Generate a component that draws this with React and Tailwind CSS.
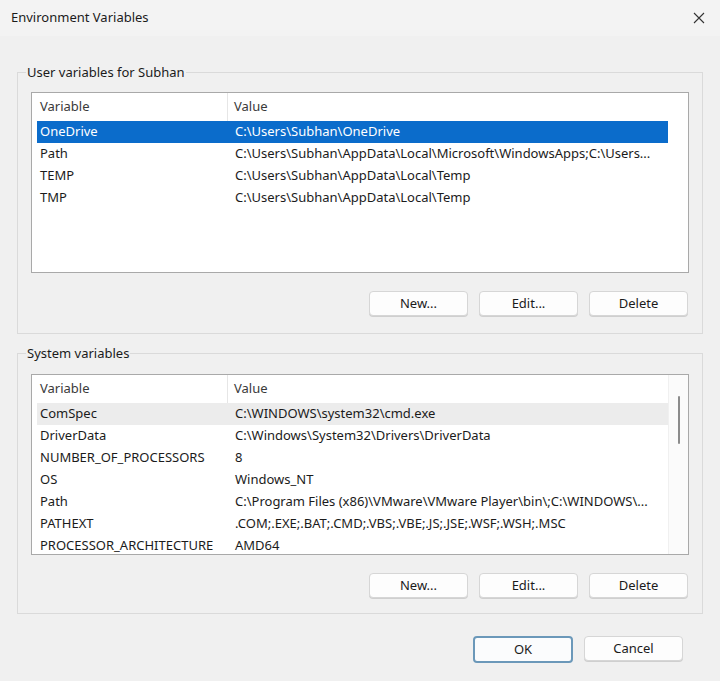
import React from 'react'

const userVars = [
    ['OneDrive', 'C:\\Users\\Subhan\\OneDrive'],
    ['Path', 'C:\\Users\\Subhan\\AppData\\Local\\Microsoft\\WindowsApps;C:\\Users...'],
    ['TEMP', 'C:\\Users\\Subhan\\AppData\\Local\\Temp'],
    ['TMP', 'C:\\Users\\Subhan\\AppData\\Local\\Temp'],
];

const systemVars = [
    ['ComSpec', 'C:\\WINDOWS\\system32\\cmd.exe'],
    ['DriverData', 'C:\\Windows\\System32\\Drivers\\DriverData'],
    ['NUMBER_OF_PROCESSORS', '8'],
    ['OS', 'Windows_NT'],
    ['Path', 'C:\\Program Files (x86)\\VMware\\VMware Player\\bin\\;C:\\WINDOWS\\...'],
    ['PATHEXT', '.COM;.EXE;.BAT;.CMD;.VBS;.VBE;.JS;.JSE;.WSF;.WSH;.MSC'],
    ['PROCESSOR_ARCHITECTURE', 'AMD64'],
];

const Button = ({ children, primary }) => (
    <button
        className={
            primary
                ? 'h-[27px] w-[100px] rounded-[4px] border-2 border-[#6b98b9] bg-[#fbfcfd] text-[13px] text-[#1b1b1b]'
                : 'h-[25px] w-[99px] rounded-[4px] border border-[#d6d6d6] bg-[#fdfdfd] text-[13px] text-[#1b1b1b] shadow-[0_1px_0_#cfcfcf]'
        }
    >
        {children}
    </button>
);

const VarList = ({ rows, selected, scroll }) => (
    <div className="flex h-[181px] border border-[#a9a9a9] bg-white">
        <div className="min-w-0 flex-1 overflow-hidden pl-[5px]">
            {/* header */}
            <div className="grid h-[28px] grid-cols-[191px_1fr] text-[#3a3a3a]">
                <div className="flex items-center border-r border-[#e6e6e6] pl-[3px]">Variable</div>
                <div className="flex items-center pl-[6px]">Value</div>
            </div>
            {rows.map(([name, value], i) => {
                let rowClass = 'text-[#1b1b1b]';
                if (i === 0 && selected === 'blue') rowClass = 'bg-[#0b6ccb] text-white';
                if (i === 0 && selected === 'gray') rowClass = 'bg-[#ececec] text-[#1b1b1b]';
                return (
                    <div key={name} className={`grid h-[22px] grid-cols-[191px_1fr] ${rowClass}`}>
                        <div className="flex items-center pl-[3px]">{name}</div>
                        <div className="flex items-center pl-[7px]">
                            <span>{value}</span>
                        </div>
                    </div>
                );
            })}
        </div>
        <div className={`flex w-[20px] shrink-0 justify-center pt-[21px] ${scroll ? 'border-l border-[#f0f0f0] bg-[#fbfbfb]' : ''}`}>
            {scroll && <div className="h-[48px] w-[2px] rounded-full bg-[#8c8c8c]" />}
        </div>
    </div>
);

const Group = ({ title, children, className }) => (
    <fieldset className={`border border-[#dadada] px-[13px] ${className}`}>
        <legend className="-ml-[5px] px-[1px] leading-[16px] text-[#1b1b1b]">{title}</legend>
        {children}
    </fieldset>
);

const App = () => {
    return (
        <div
            className="flex h-[681px] w-[720px] flex-col bg-[#f0f0f0] text-[13px]"
            style={{ fontFamily: '"Noto Sans", "Open Sans", sans-serif' }}
        >
            {/* title bar */}
            <div className="flex h-[36px] items-center justify-between bg-[#f3f3f3] pl-[11px] pr-[14px]">
                <span className="text-[#1b1b1b]">Environment Variables</span>
                <svg width="12" height="12" viewBox="0 0 12 12" className="mr-[1px]">
                    <path d="M1 1 L11 11 M11 1 L1 11" stroke="#333" strokeWidth="1.1" />
                </svg>
            </div>

            <div className="flex flex-col px-[17px] pt-[28px]">
                <Group title="User variables for Subhan" className="pb-[17px]">
                    <div className="pt-[12px]">
                        <VarList rows={userVars} selected="blue" />
                    </div>
                    <div className="mt-[18px] flex justify-end gap-[11px] pr-[1px]">
                        <Button>New...</Button>
                        <Button>Edit...</Button>
                        <Button>Delete</Button>
                    </div>
                </Group>

                <Group title="System variables" className="mt-[11px] pb-[15px]">
                    <div className="pt-[13px]">
                        <VarList rows={systemVars} selected="gray" scroll />
                    </div>
                    <div className="mt-[18px] flex justify-end gap-[11px] pr-[1px]">
                        <Button>New...</Button>
                        <Button>Edit...</Button>
                        <Button>Delete</Button>
                    </div>
                </Group>

                <div className="mt-[22px] flex justify-end gap-[11px] pr-[20px]">
                    <Button primary>OK</Button>
                    <Button>Cancel</Button>
                </div>
            </div>
        </div>
    )
};

export default App;
